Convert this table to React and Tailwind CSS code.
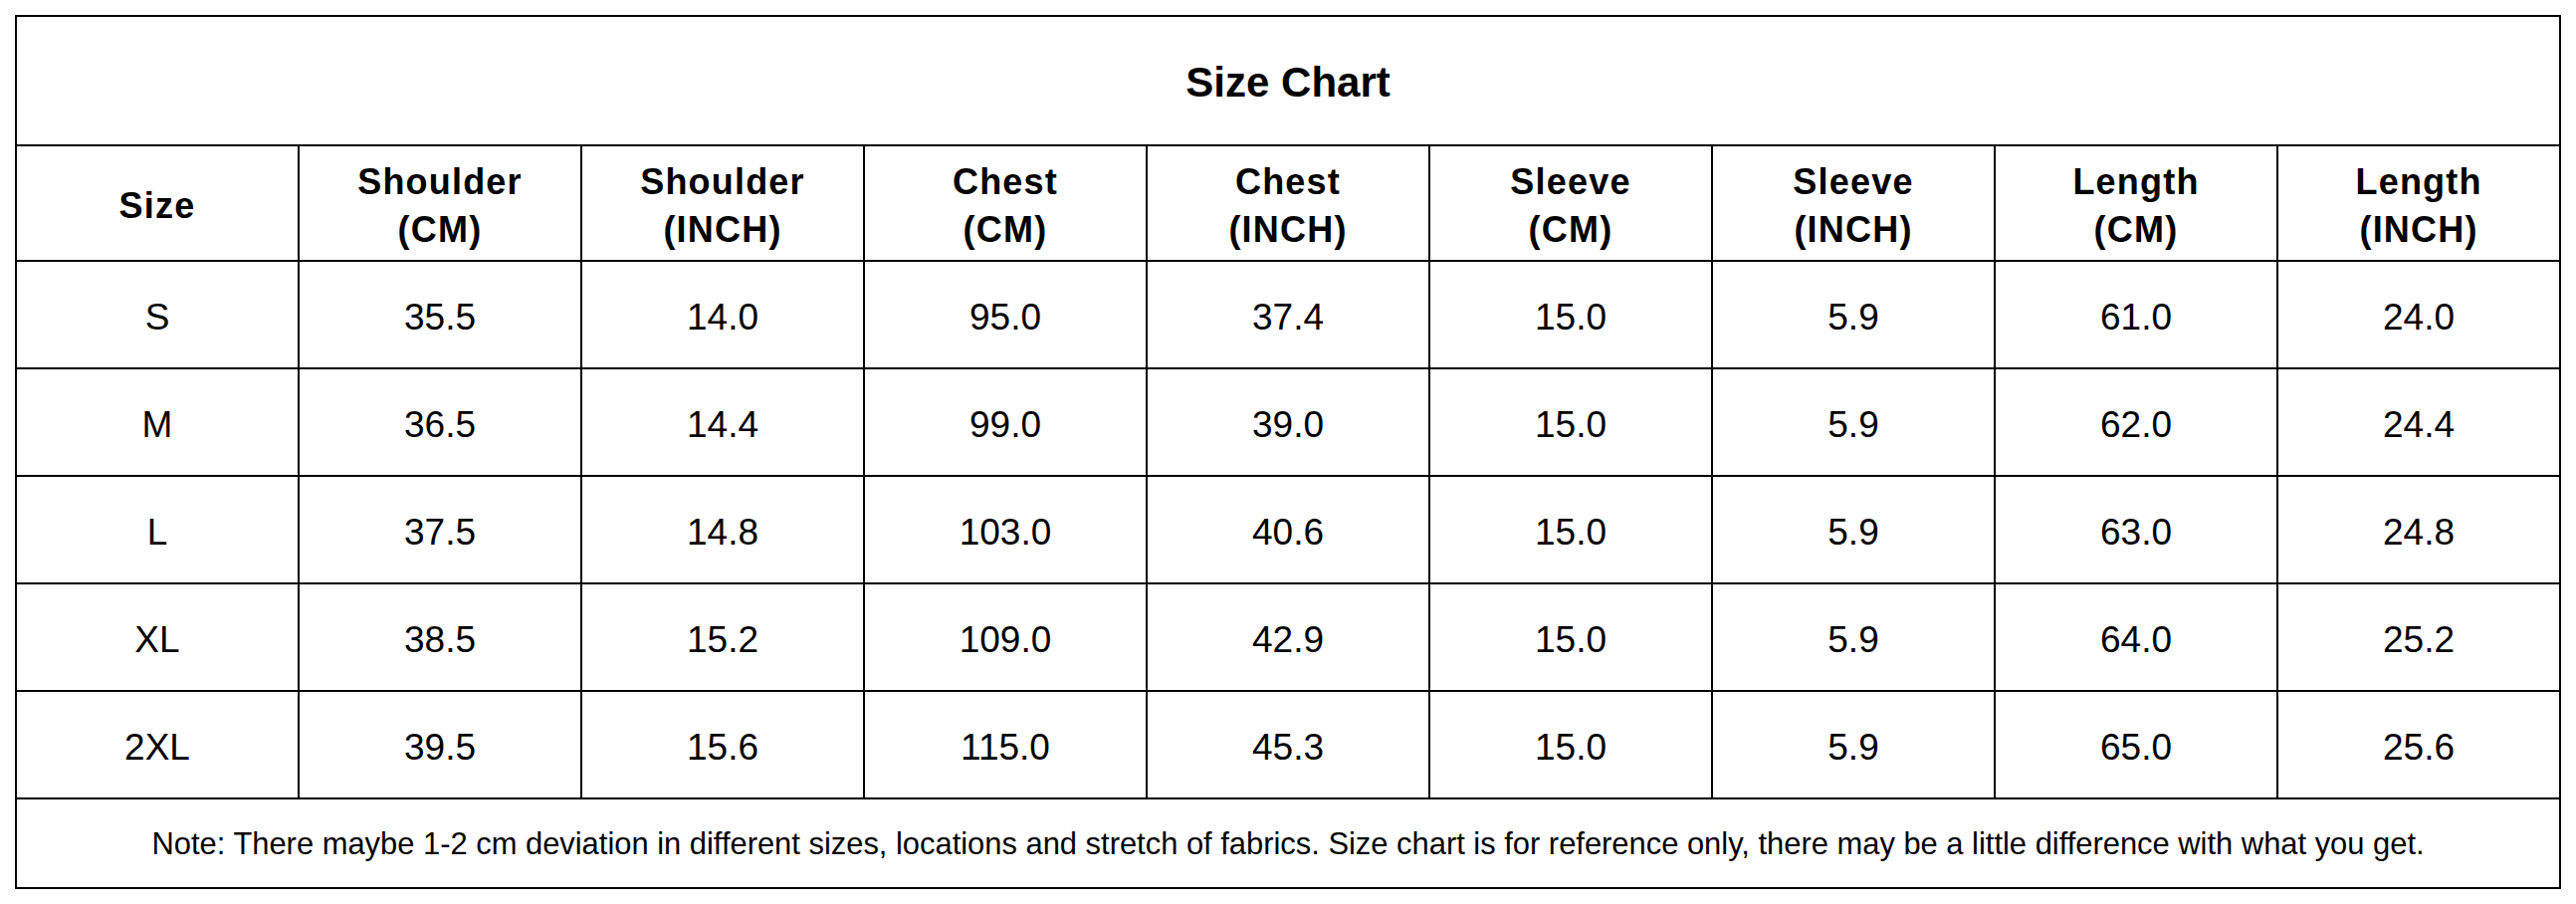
import React from 'react';

const headers = [
  ['Size'],
  ['Shoulder', '(CM)'],
  ['Shoulder', '(INCH)'],
  ['Chest', '(CM)'],
  ['Chest', '(INCH)'],
  ['Sleeve', '(CM)'],
  ['Sleeve', '(INCH)'],
  ['Length', '(CM)'],
  ['Length', '(INCH)'],
];

const rows = [
  ['S', '35.5', '14.0', '95.0', '37.4', '15.0', '5.9', '61.0', '24.0'],
  ['M', '36.5', '14.4', '99.0', '39.0', '15.0', '5.9', '62.0', '24.4'],
  ['L', '37.5', '14.8', '103.0', '40.6', '15.0', '5.9', '63.0', '24.8'],
  ['XL', '38.5', '15.2', '109.0', '42.9', '15.0', '5.9', '64.0', '25.2'],
  ['2XL', '39.5', '15.6', '115.0', '45.3', '15.0', '5.9', '65.0', '25.6'],
];

export default function App() {
  const cell = "border-2 border-black text-center align-middle px-0 pb-0";

  return (
    <div className="w-[2588px] h-[908px] bg-white text-black font-['Liberation_Sans',Arial,sans-serif] pt-[15px] pl-[15px]">
      <table className="table-fixed border-collapse w-[2558px]">
        <colgroup>
          {headers.map((_, i) => <col key={i} className="w-[284px]" />)}
        </colgroup>
        <tbody>
          {/* Title */}
          <tr className="h-[130px]">
            <td colSpan={9} className={`${cell} pt-[2px] text-[42px] font-bold`}>Size Chart</td>
          </tr>

          {/* Column headers */}
          <tr className="h-[116px]">
            {headers.map((h, i) => (
              <td key={i} className={`${cell} pt-[6px] text-[36px] font-bold leading-[48px] tracking-[1.2px]`}>
                {h.map((line, j) => <div key={j}>{line}</div>)}
              </td>
            ))}
          </tr>

          {/* Sizes */}
          {rows.map(r => (
            <tr key={r[0]} className="h-[108px]">
              {r.map((v, i) => (
                <td key={i} className={`${cell} pt-[6px] text-[37px]`}>{v}</td>
              ))}
            </tr>
          ))}

          {/* Note */}
          <tr className="h-[90px]">
            <td colSpan={9} className={`${cell} pt-[3px] text-[30.9px]`}>
              Note: There maybe 1-2 cm deviation in different sizes, locations and stretch of fabrics. Size chart is for reference only, there may be a little difference with what you get.
            </td>
          </tr>
        </tbody>
      </table>
    </div>
  );
}
